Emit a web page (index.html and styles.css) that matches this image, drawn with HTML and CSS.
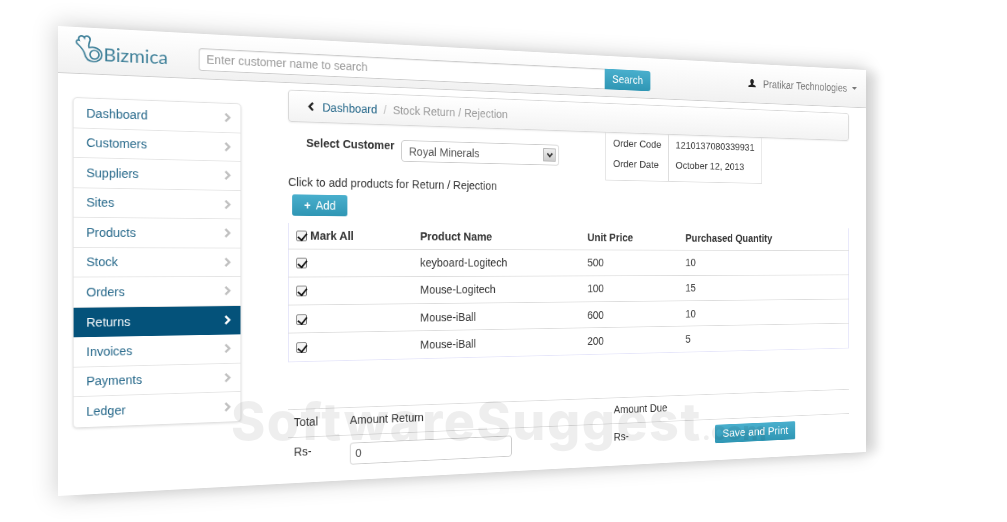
FILE: index.html
```html
<!DOCTYPE html>
<html lang="en">
<head>
<meta charset="utf-8">
<title>Bizmica - Stock Return</title>
<link rel="stylesheet" href="styles.css">
</head>
<body>
<div class="sheet">
  <header class="topbar">
    <a class="brand">
      <svg class="brand-mark" viewBox="0 0 30 32" width="30" height="32" aria-hidden="true">
        <path d="M3 12C0 10 1 6 4 7 2 2 8 0 10 4 11 0 17 2 16 7 15 10 14 12 15 15 20 13 29 16 29 23 29 28 25 31 20 31 14 31 11 27 10 22 9 18 6 15 3 12Z" fill="none" stroke="#3d7f98" stroke-width="1.7"/>
        <circle cx="21" cy="23" r="5" fill="none" stroke="#3d7f98" stroke-width="1.7"/>
      </svg>
      <span class="brand-name">Bizmica</span>
    </a>
    <form class="search">
      <input class="search-input" type="text" placeholder="Enter customer name to search">
      <button class="btn search-btn" type="button">Search</button>
    </form>
    <div class="user">
      <svg class="user-icon" viewBox="0 0 14 14" width="13" height="13" aria-hidden="true"><path d="M7 1C5 1 4 2.6 4 4.6 4 6 4.7 7.2 5.4 7.8V8.8L1.5 10.4C1 10.7 1 11.5 1 13H13C13 11.5 13 10.7 12.5 10.4L8.6 8.8V7.8C9.3 7.2 10 6 10 4.6 10 2.6 9 1 7 1Z" fill="#222"/></svg>
      <span>Pratikar Technologies</span>
      <i class="caret"></i>
    </div>
  </header>
  <div class="body">
    <nav class="side">
      <a class="side-item">Dashboard<svg class="chev" viewBox="0 0 10 14" aria-hidden="true"><path d="M2 2 7 7 2 12"/></svg></a>
      <a class="side-item">Customers<svg class="chev" viewBox="0 0 10 14" aria-hidden="true"><path d="M2 2 7 7 2 12"/></svg></a>
      <a class="side-item">Suppliers<svg class="chev" viewBox="0 0 10 14" aria-hidden="true"><path d="M2 2 7 7 2 12"/></svg></a>
      <a class="side-item">Sites<svg class="chev" viewBox="0 0 10 14" aria-hidden="true"><path d="M2 2 7 7 2 12"/></svg></a>
      <a class="side-item">Products<svg class="chev" viewBox="0 0 10 14" aria-hidden="true"><path d="M2 2 7 7 2 12"/></svg></a>
      <a class="side-item">Stock<svg class="chev" viewBox="0 0 10 14" aria-hidden="true"><path d="M2 2 7 7 2 12"/></svg></a>
      <a class="side-item">Orders<svg class="chev" viewBox="0 0 10 14" aria-hidden="true"><path d="M2 2 7 7 2 12"/></svg></a>
      <a class="side-item active">Returns<svg class="chev" viewBox="0 0 10 14" aria-hidden="true"><path d="M2 2 7 7 2 12"/></svg></a>
      <a class="side-item">Invoices<svg class="chev" viewBox="0 0 10 14" aria-hidden="true"><path d="M2 2 7 7 2 12"/></svg></a>
      <a class="side-item">Payments<svg class="chev" viewBox="0 0 10 14" aria-hidden="true"><path d="M2 2 7 7 2 12"/></svg></a>
      <a class="side-item">Ledger<svg class="chev" viewBox="0 0 10 14" aria-hidden="true"><path d="M2 2 7 7 2 12"/></svg></a>
    </nav>
    <main class="main">
      <div class="crumb">
        <svg class="crumb-back" viewBox="0 0 10 14" aria-hidden="true"><path d="M7.5 2 3 7 7.5 12"/></svg>
        <a class="crumb-link">Dashboard</a><span class="crumb-sep">/</span><span class="crumb-cur">Stock Return / Rejection</span>
      </div>
      <div class="cust-row">
        <label class="cust-label">Select Customer</label>
        <div class="select"><span>Royal Minerals</span><span class="select-arrow"><svg viewBox="0 0 10 8" width="10" height="8" aria-hidden="true"><path d="M1.5 1.5 5 5.5 8.5 1.5" fill="none" stroke="#333" stroke-width="2"/></svg></span></div>
        <table class="order">
          <tr><td>Order Code</td><td>1210137080339931</td></tr>
          <tr><td>Order Date</td><td>October 12, 2013</td></tr>
        </table>
      </div>
      <p class="hint">Click to add products for Return / Rejection</p>
      <button class="btn add-btn" type="button"><b class="plus">+</b>Add</button>
      <table class="products">
        <thead>
          <tr><th class="c1"><span class="check on"></span>Mark All</th><th class="c2">Product Name</th><th class="c3">Unit Price</th><th>Purchased Quantity</th></tr>
        </thead>
        <tbody>
          <tr><td class="c1"><span class="check on"></span></td><td class="c2">keyboard-Logitech</td><td class="c3">500</td><td>10</td></tr>
          <tr><td class="c1"><span class="check on"></span></td><td class="c2">Mouse-Logitech</td><td class="c3">100</td><td>15</td></tr>
          <tr><td class="c1"><span class="check on"></span></td><td class="c2">Mouse-iBall</td><td class="c3">600</td><td>10</td></tr>
          <tr><td class="c1"><span class="check on"></span></td><td class="c2">Mouse-iBall</td><td class="c3">200</td><td>5</td></tr>
        </tbody>
      </table>
      <div class="totals">
        <div class="t-row t-head">
          <span class="t1">Total</span><span class="t2">Amount Return</span><span class="t3">Amount Due</span>
        </div>
        <div class="t-row t-body">
          <span class="t1">Rs-</span>
          <span class="t2"><input class="amount" type="text" value="0"></span>
          <span class="t3">Rs-</span>
          <button class="btn save-btn" type="button">Save and Print</button>
        </div>
      </div>
    </main>
  </div>
</div>
<div class="watermark">SoftwareSuggest<small class="wm-tld">.com</small></div>
</body>
</html>
```
FILE: styles.css
```css
html, body { margin: 0; padding: 0; background: #fff; height: 100%; overflow: hidden; }
body { font-family: "Liberation Sans", Arial, sans-serif; color: #333; font-size: 14px; }
* { box-sizing: border-box; }

.sheet {
  width: 1080px; height: 540px; background: #fff;
  position: absolute; left: 0; top: 0;
  transform-origin: 0 0;
  transform: matrix3d(0.93287, 0.055672, 0, 0.00021331, 0, 0.87037, 0, 0, 0, 0, 1, 0, 58, 26, 0, 1);
  box-shadow: 0 0 24px 3px rgba(0,0,0,.17), 20px 2px 14px rgba(0,0,0,.09);
  filter: blur(.3px);
}

.topbar {
  height: 54px; display: flex; align-items: center; padding: 0 15px 0 19px;
  background: linear-gradient(#fff, #f1f1f1); border-bottom: 1px solid #cfcfcf;
}
.brand { display: flex; align-items: flex-end; width: 139px; flex: none; margin-top: -5px; }
.brand-mark { flex: none; margin-right: 1px; }
.brand-name { font-family: Lato, sans-serif; font-size: 21.5px; color: #3d7f98; line-height: 24px; margin-bottom: -2px; }
.search { display: flex; flex: none; margin-top: 7px; }
.search-input {
  width: 522px; height: 27px; border: 1px solid #ccc; border-right: 0; border-radius: 4px 0 0 4px;
  padding: 0 8px; font: 14px "Liberation Sans", Arial, sans-serif; background: #fff;
  box-shadow: inset 0 1px 1px rgba(0,0,0,.08);
}
.search-input::placeholder { color: #999; opacity: 1; }
.btn {
  border: 0; color: #fff; background: linear-gradient(#49afcd, #2f96b4);
  font: 14px "Liberation Sans", Arial, sans-serif; border-radius: 0 4px 4px 0; padding: 0;
}
.search-btn { width: 66px; height: 27px; }
.user { margin-left: auto; display: flex; align-items: center; gap: 10px; color: #777; font-size: 14px; }
.caret { border: 4px solid transparent; border-top-color: #777; border-bottom: 0; margin-left: -2px; }

.body { display: flex; align-items: flex-start; padding: 8px 28px 0 16px; gap: 56px; }
.side {
  width: 192px; flex: none; margin-top: 19px; background: #fff; border: 1px solid #e2e2e2; border-radius: 5px;
  box-shadow: 0 1px 3px rgba(0,0,0,.12); overflow: hidden;
}
.side-item {
  height: 34.5px; display: flex; align-items: center; justify-content: space-between;
  padding: 0 10px 0 14px; color: #26688a; border-bottom: 1px solid #e5e5e5; font-size: 14px;
}
.side-item:last-child { border-bottom: 0; }
.side-item.active { background: #04527a; color: #fff; border-bottom: 0; }
.chev { width: 10px; height: 13px; fill: none; stroke: #c0c0c0; stroke-width: 2.8; }
.active .chev { stroke: #fff; }

.main { flex: 1; min-width: 0; }
.crumb {
  height: 39px; display: flex; align-items: center; padding-left: 22px;
  border: 1px solid #d8d8d8; border-radius: 4px; background: linear-gradient(#fff, #f3f3f3);
  font-size: 14px; box-shadow: 0 1px 2px rgba(0,0,0,.08);
}
.crumb-back { width: 10px; height: 13px; fill: none; stroke: #222; stroke-width: 2.8; margin-right: 9px; }
.crumb-link { color: #26688a; }
.crumb-sep { color: #bbb; margin: 0 8px; }
.crumb-cur { color: #999; }

.cust-row { display: flex; align-items: flex-start; }
.cust-label { font-weight: bold; margin: 17px 0 0 22px; width: 119px; flex: none; color: #333; font-size: 14px; }
.select {
  width: 211px; height: 27px; border: 1px solid #ccc; border-radius: 4px; display: flex; align-items: center; flex: none;
  justify-content: space-between; padding: 0 4px 0 9px; color: #555; font-size: 14px; margin-top: 18px;
}
.select-arrow { width: 17px; height: 17px; border: 1px solid #aaa; background: linear-gradient(#eee, #ccc); display: flex; align-items: center; justify-content: center; }
.order {
  margin-left: 65px; width: 233px; height: 62px; flex: none; border-collapse: collapse; font-size: 13.4px;
  border: 1px solid #ddd; border-top: 0; white-space: nowrap;
}
.order td { padding: 0 10px; height: 26px; vertical-align: middle; }
.order td:first-child { width: 91px; border-right: 1px solid #ddd; }
.order tr:last-child td { height: 36px; padding-bottom: 7px; }

.hint { margin: 2px 0 0; line-height: 16px; font-size: 14px; }
.add-btn { display: block; margin: 7px 0 9px 5px; width: 68px; height: 26px; border-radius: 3px; font-size: 14px; }
.plus { margin-right: 6px; }

.products { width: 100%; border-collapse: collapse; font-size: 14px; border-left: 1px solid #e6e6fa; border-right: 1px solid #e6e6fa; border-bottom: 1px solid #e6e6fa; }
.products th { height: 31.5px; text-align: left; font-weight: bold; border-bottom: 1px solid #ddd; padding: 0; }
.products td { height: 34.25px; border-bottom: 1px solid #ddd; padding: 0; }
.products tr:last-child td { border-bottom: 0; }
.products .c1 { width: 165px; padding-left: 9px; }
.c2 { width: 226px; }
.c3 { width: 142px; }
.check {
  display: inline-block; width: 13px; height: 13px; border: 1px solid #777; border-radius: 2px; background: #f4f4f4; vertical-align: -2px; margin-right: 4px; position: relative;
}
.check.on::after {
  content: ""; position: absolute; left: 3px; top: 0; width: 5px; height: 9px; border: solid #111; border-width: 0 2.2px 2.2px 0; transform: rotate(40deg);
}

.totals { margin-top: 57px; font-size: 14px; }
.t-row { display: flex; border-top: 1px solid #ddd; }
.t-head { height: 34px; align-items: center; padding-bottom: 3px; }
.t-body { height: 44px; align-items: flex-start; padding-top: 9px; }
.t1 { width: 76px; padding-left: 7px; flex: none; }
.t2 { width: 353px; flex: none; }
.t3 { width: 149px; flex: none; }
.t-body .t1, .t-body .t3 { margin-top: 0; }
.amount { width: 211px; height: 27px; border: 1px solid #ccc; border-radius: 4px; padding: 0 6px; font: 14px "Liberation Sans", Arial, sans-serif; color: #555; }
.save-btn { width: 124px; height: 25px; border-radius: 2px; font-size: 15.5px; margin-top: -2px; }

.watermark {
  position: absolute; left: 231px; top: 390px; font: 800 52px Inter, "Open Sans", sans-serif; letter-spacing: 1.5px;
  color: rgba(0,0,0,.065); white-space: nowrap; pointer-events: none;
}
.wm-tld { font-size: 26px; letter-spacing: 0; }
```
